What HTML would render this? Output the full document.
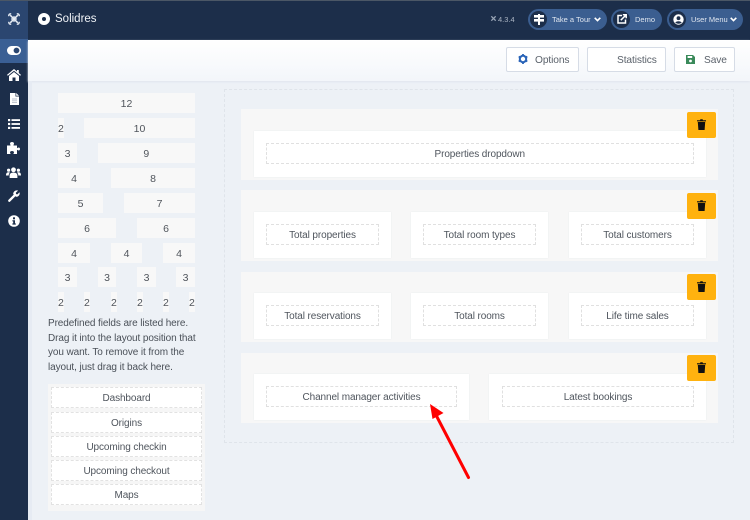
<!DOCTYPE html>
<html><head><meta charset="utf-8">
<style>
html,body{margin:0;padding:0}
body{width:750px;height:520px;position:relative;overflow:hidden;background:#edf1f6;font-family:"Liberation Sans",sans-serif;color:#495057;font-size:10px;letter-spacing:-.1px}
div{position:absolute;box-sizing:border-box}
svg{position:absolute;overflow:visible}
.g{background:#f8f8f8;text-align:center;height:20px;line-height:22px;color:#50555c;font-size:10.5px;letter-spacing:0}
.sec{left:241px;width:477px;background:#f7f7f7}
.card{background:#fff;box-shadow:0 0 1px #e4e6ea}
.d{border:1px dashed #e0e0e0;text-align:center;height:21px;line-height:21px;color:#4f555d;white-space:nowrap}
.tr{left:686.5px;width:29.5px;height:26px;background:#ffb20f;border-radius:2px}
.btn{top:47px;height:25px;background:#fff;border:1px solid #d6dce6;border-radius:2px;line-height:25px;color:#5b626b;white-space:nowrap;font-size:10.2px}
.pill{top:9px;height:21px;background:#3b5e90;border-radius:11px;color:#dfe6f0;font-size:7.5px;line-height:21px;white-space:nowrap;letter-spacing:0}
.circ{left:2px;top:2px;width:17px;height:17px;border-radius:50%;background:#1c2e4a}
.li{left:51px;width:151px;height:21px;background:#fff;border:1px dashed #e2e2e2;text-align:center;line-height:21px;color:#4f555d}
</style></head><body>
<!-- header -->
<div style="left:0;top:0;width:750px;height:40px;background:#1c2e4a;border-top:1px solid #4b5766"></div>
<div style="left:0;top:1px;width:28px;height:38px;background:#2b4670"></div>
<svg style="left:8px;top:13px" width="12" height="12" viewBox="0 0 12 12" fill="none" stroke="#e8edf4">
<path d="M2.2 2.2L9.8 9.8M9.8 2.2L2.2 9.8" stroke-width="1.5"/>
<path d="M.8 3.2Q.6 .6 3.2 .8M8.8 .8Q11.4 .6 11.2 3.2M.8 8.8Q.6 11.4 3.2 11.2M8.8 11.2Q11.4 11.4 11.2 8.8" stroke-width="1.4"/>
<path d="M6 3.6L8.4 6L6 8.4L3.6 6Z" stroke-width="1"/></svg>
<div style="left:38px;top:13px;width:12px;height:12px;border-radius:50%;border:4px solid #fff;background:#1c2e4a"></div>
<div style="left:55px;top:12px;color:#f0f3f7;font-size:11.5px;line-height:15px;letter-spacing:0">Solidres</div>
<svg style="left:490px;top:15px" width="7" height="7" viewBox="0 0 16 16" fill="none" stroke="#9aa6b6" stroke-width="3"><path d="M3 3L13 13M13 3L3 13"/></svg>
<div style="left:498px;top:13px;color:#a9b3c1;font-size:7.5px;line-height:13px;letter-spacing:0">4.3.4</div>

<div class="pill" style="left:528px;width:79px"><div class="circ"></div>
<svg style="left:6px;top:5px" width="10" height="11" viewBox="0 0 10 11" fill="#fff"><rect x="0" y="1" width="10" height="2.6"/><rect x="0" y="5" width="10" height="2.6"/><rect x="4" y="0" width="2" height="11"/></svg>
<div style="left:24px;top:0">Take a Tour</div>
<svg style="left:66px;top:8px" width="7" height="5" viewBox="0 0 7 5" fill="none" stroke="#fff" stroke-width="1.6"><path d="M.7 .8L3.5 3.6L6.3 .8"/></svg></div>
<div class="pill" style="left:611px;width:51px"><div class="circ"></div>
<svg style="left:6px;top:5px" width="10" height="10" viewBox="0 0 10 10" fill="none" stroke="#fff" stroke-width="1.5"><path d="M5 1.5H1V9H8.5V5.5M3.8 6.2L9 1M5.8 .8H9.2V4.2"/></svg>
<div style="left:24px;top:0">Demo</div></div>
<div class="pill" style="left:667px;width:76px"><div class="circ"></div>
<svg style="left:5.5px;top:5px" width="11" height="11" viewBox="0 0 11 11"><circle cx="5.5" cy="5.5" r="5.2" fill="#fff"/><circle cx="5.5" cy="4.2" r="1.9" fill="#1c2e4a"/><path d="M2.3 8.8C3 6.8 8 6.8 8.7 8.8Q5.5 10.8 2.3 8.8Z" fill="#1c2e4a"/></svg>
<div style="left:24px;top:0">User Menu</div>
<svg style="left:63px;top:8px" width="7" height="5" viewBox="0 0 7 5" fill="none" stroke="#fff" stroke-width="1.6"><path d="M.7 .8L3.5 3.6L6.3 .8"/></svg></div>

<!-- sidebar -->
<div style="left:0;top:40px;width:28px;height:480px;background:#1c2e4a"></div>
<div style="left:0;top:39px;width:28px;height:24px;background:#3a5f94"></div>
<svg style="left:7px;top:46px" width="14" height="9" viewBox="0 0 14 9"><rect width="14" height="9" rx="4.5" fill="#fff"/><circle cx="9.5" cy="4.5" r="2.9" fill="#2b4670"/></svg>
<svg style="left:7px;top:69px" width="14" height="12" viewBox="0 0 14 12" fill="#fff"><path d="M7 0L10 2.5V1H11.8V4L14 5.9L13.2 6.8L7 1.7L.8 6.8L0 5.9Z"/><path d="M7 3L12 7V12H8.5V8.5H5.5V12H2V7Z"/></svg>
<svg style="left:9.5px;top:93px" width="9" height="12" viewBox="0 0 9 12"><path d="M0 0H5.5V3.5H9V12H0Z" fill="#fff"/><path d="M6.2 0L9 2.8H6.2Z" fill="#fff"/><path d="M2 6H7M2 7.8H7M2 9.6H7" stroke="#b9c1cc" stroke-width=".9"/></svg>
<svg style="left:8px;top:119px" width="12" height="10" viewBox="0 0 12 10" fill="#fff"><rect y="0" width="2.2" height="2.2"/><rect y="3.9" width="2.2" height="2.2"/><rect y="7.8" width="2.2" height="2.2"/><rect x="3.5" y=".2" width="8.5" height="1.8"/><rect x="3.5" y="4.1" width="8.5" height="1.8"/><rect x="3.5" y="8" width="8.5" height="1.8"/></svg>
<svg style="left:7px;top:142px" width="13" height="12" viewBox="0 0 13 12" fill="#fff"><path d="M0 3.5H3.5C3.7 2.8 3 2.4 3 1.5C3 .5 4 0 5 0S7 .5 7 1.5C7 2.4 6.3 2.8 6.5 3.5H10V6.2C10.7 6 11 5.5 11.7 5.5C12.5 5.5 13 6.2 13 7S12.5 8.5 11.7 8.5C11 8.5 10.7 8 10 7.8V12H6.4C6.5 11.3 7 11 7 10.3C7 9.5 6 9 5 9S3 9.5 3 10.3C3 11 3.5 11.3 3.6 12H0Z"/></svg>
<svg style="left:6px;top:167px" width="15" height="11" viewBox="0 0 15 11" fill="#fff"><circle cx="7.5" cy="2.8" r="2.4"/><circle cx="2.6" cy="3.2" r="1.6"/><circle cx="12.4" cy="3.2" r="1.6"/><path d="M3.6 11V8.5C3.6 6.5 5 5.6 7.5 5.6S11.4 6.5 11.4 8.5V11Z"/><path d="M0 8.5C0 6 1 5.3 2.6 5.3C3.2 5.3 3.6 5.4 3.9 5.7C3 6.4 2.7 7.3 2.7 8.5Z"/><path d="M15 8.5C15 6 14 5.3 12.4 5.3C11.8 5.3 11.4 5.4 11.1 5.7C12 6.4 12.3 7.3 12.3 8.5Z"/></svg>
<svg style="left:8px;top:190px" width="12" height="12" viewBox="0 0 12 12"><path d="M1.3 10.7L6.3 5.7" stroke="#fff" stroke-width="2.4" stroke-linecap="round"/><path d="M5.2 4C5.2 1.5 7.7 -.3 10 .6L7.8 2.8L8.1 4.1L9.4 4.4L11.5 2.2C12.3 4.5 10.5 6.9 8 6.8Z" fill="#fff"/></svg>
<svg style="left:8px;top:215px" width="12" height="12" viewBox="0 0 12 12"><circle cx="6" cy="6" r="5.8" fill="#fff"/><rect x="5" y="2.3" width="2" height="2" fill="#1c2e4a"/><path d="M4.4 5.2H7V8.4H7.8V9.6H4.4V8.4H5.2V6.4H4.4Z" fill="#1c2e4a"/></svg>

<!-- toolbar -->
<div style="left:28px;top:40px;width:722px;height:41px;background:linear-gradient(#fff,#f3f6fa);box-shadow:0 1px 2px #e0e5ee"></div>
<div style="left:28px;top:81px;width:4px;height:439px;background:#e6ebf3"></div>
<div class="btn" style="left:506px;width:73px"><div style="left:28px;top:0">Options</div>
<svg style="left:11px;top:6px" width="10" height="10" viewBox="0 0 10 10"><circle cx="5" cy="5" r="3.2" fill="none" stroke="#2a64b8" stroke-width="2"/><path d="M5 0V2M5 8V10M.7 2.5L2.4 3.5M7.6 6.5L9.3 7.5M.7 7.5L2.4 6.5M7.6 3.5L9.3 2.5" stroke="#2a64b8" stroke-width="1.8"/></svg></div>
<div class="btn" style="left:587px;width:79px"><div style="left:29px;top:0">Statistics</div></div>
<div class="btn" style="left:674px;width:61px"><div style="left:29px;top:0">Save</div>
<svg style="left:11px;top:7px" width="9" height="9" viewBox="0 0 9 9"><path d="M0 0H7L9 2V9H0Z" fill="#3a8a5a"/><rect x="1.6" y="1" width="4.6" height="2" fill="#fff"/><circle cx="4.5" cy="6" r="1.4" fill="#fff"/></svg></div>

<!-- grid -->
<div class="g" style="left:58px;top:93px;width:137px">12</div>
<div class="g" style="left:58px;top:118px;width:5.5px;overflow:visible"><span style="position:absolute;left:0">2</span></div><div class="g" style="left:84px;top:118px;width:111px">10</div>
<div class="g" style="left:58px;top:143px;width:19px">3</div><div class="g" style="left:97.5px;top:143px;width:97.5px">9</div>
<div class="g" style="left:58px;top:168px;width:32px">4</div><div class="g" style="left:111px;top:168px;width:84px">8</div>
<div class="g" style="left:58px;top:193px;width:45px">5</div><div class="g" style="left:124px;top:193px;width:71px">7</div>
<div class="g" style="left:58px;top:218px;width:58px">6</div><div class="g" style="left:137px;top:218px;width:58px">6</div>
<div class="g" style="left:58px;top:243px;width:32px">4</div><div class="g" style="left:111px;top:243px;width:31px">4</div><div class="g" style="left:163px;top:243px;width:32px">4</div>
<div class="g" style="left:58px;top:267px;width:19px">3</div><div class="g" style="left:98px;top:267px;width:18px">3</div><div class="g" style="left:137px;top:267px;width:19px">3</div><div class="g" style="left:176px;top:267px;width:19px">3</div>
<div class="g" style="left:58px;top:292px;width:5.5px"><span style="position:absolute;left:0">2</span></div><div class="g" style="left:84px;top:292px;width:5.5px"><span style="position:absolute;left:0">2</span></div><div class="g" style="left:111px;top:292px;width:5.5px"><span style="position:absolute;left:0">2</span></div><div class="g" style="left:137px;top:292px;width:5.5px"><span style="position:absolute;left:0">2</span></div><div class="g" style="left:163px;top:292px;width:5.5px"><span style="position:absolute;left:0">2</span></div><div class="g" style="left:189px;top:292px;width:5.5px"><span style="position:absolute;left:0">2</span></div>

<div style="left:48px;top:317px;width:165px;line-height:14.6px;color:#4a5058;white-space:nowrap">Predefined fields are listed here.<br>Drag it into the layout position that<br>you want. To remove it from the<br>layout, just drag it back here.</div>

<div style="left:48px;top:384px;width:157px;height:127px;background:#f6f6f6"></div>
<div class="li" style="top:387px">Dashboard</div>
<div class="li" style="top:411.5px">Origins</div>
<div class="li" style="top:436px">Upcoming checkin</div>
<div class="li" style="top:460px">Upcoming checkout</div>
<div class="li" style="top:484px">Maps</div>

<!-- layout area -->
<div style="left:224px;top:89px;width:510px;height:354px;border:1px dashed #dfe4ea"></div>

<div class="sec" style="top:109px;height:71px"></div>
<div class="card" style="left:254px;top:131px;width:452px;height:46px"></div>
<div class="d" style="left:265.5px;top:143px;width:428.5px">Properties dropdown</div>

<div class="sec" style="top:190px;height:71px"></div>
<div class="card" style="left:254px;top:212px;width:137px;height:46px"></div>
<div class="card" style="left:410.5px;top:212px;width:137.5px;height:46px"></div>
<div class="card" style="left:568.5px;top:212px;width:137.5px;height:46px"></div>
<div class="d" style="left:266px;top:224px;width:113px">Total properties</div>
<div class="d" style="left:423px;top:224px;width:113px">Total room types</div>
<div class="d" style="left:581px;top:224px;width:113px">Total customers</div>

<div class="sec" style="top:272px;height:70px"></div>
<div class="card" style="left:254px;top:293px;width:137px;height:46px"></div>
<div class="card" style="left:410.5px;top:293px;width:137.5px;height:46px"></div>
<div class="card" style="left:568.5px;top:293px;width:137.5px;height:46px"></div>
<div class="d" style="left:266px;top:305px;width:113px">Total reservations</div>
<div class="d" style="left:423px;top:305px;width:113px">Total rooms</div>
<div class="d" style="left:581px;top:305px;width:113px">Life time sales</div>

<div class="sec" style="top:353px;height:70px"></div>
<div class="card" style="left:254px;top:374px;width:215px;height:46px"></div>
<div class="card" style="left:489px;top:374px;width:217px;height:46px"></div>
<div class="d" style="left:266px;top:386px;width:191px">Channel manager activities</div>
<div class="d" style="left:502px;top:386px;width:192px">Latest bookings</div>

<div class="tr" style="top:112px"><svg style="left:10.5px;top:7px" width="9" height="11" viewBox="0 0 9 11"><path d="M0 1.2H3L3.4 .3H5.6L6 1.2H9V2.4H0Z M.8 3H8.2L7.6 11H1.4Z" fill="#111"/></svg></div>
<div class="tr" style="top:193px"><svg style="left:10.5px;top:7px" width="9" height="11" viewBox="0 0 9 11"><path d="M0 1.2H3L3.4 .3H5.6L6 1.2H9V2.4H0Z M.8 3H8.2L7.6 11H1.4Z" fill="#111"/></svg></div>
<div class="tr" style="top:274px"><svg style="left:10.5px;top:7px" width="9" height="11" viewBox="0 0 9 11"><path d="M0 1.2H3L3.4 .3H5.6L6 1.2H9V2.4H0Z M.8 3H8.2L7.6 11H1.4Z" fill="#111"/></svg></div>
<div class="tr" style="top:355px"><svg style="left:10.5px;top:7px" width="9" height="11" viewBox="0 0 9 11"><path d="M0 1.2H3L3.4 .3H5.6L6 1.2H9V2.4H0Z M.8 3H8.2L7.6 11H1.4Z" fill="#111"/></svg></div>

<!-- arrow -->
<svg style="left:0;top:0" width="750" height="520"><path d="M468.5 477.5L436 415" stroke="#f00" stroke-width="3" fill="none" stroke-linecap="round"/><path d="M430 404L443.5 413L432.5 419Z" fill="#f00"/></svg>
</body></html>
